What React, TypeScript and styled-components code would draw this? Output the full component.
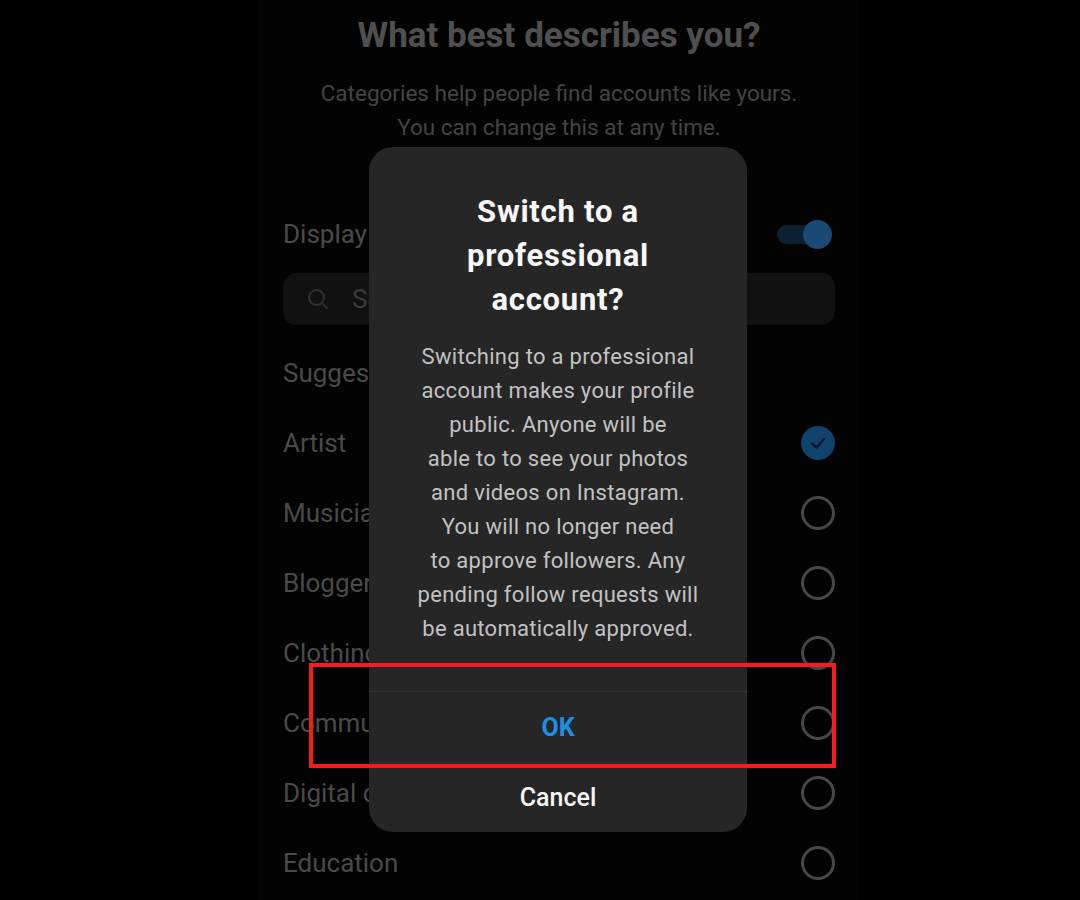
import React from 'react';
import styled, { createGlobalStyle } from 'styled-components';

const CATEGORIES = [
  { id: 1, label: 'Artist', checked: true },
  { id: 2, label: 'Musician/band', checked: false },
  { id: 3, label: 'Blogger', checked: false },
  { id: 4, label: 'Clothing (Brand)', checked: false },
  { id: 5, label: 'Community', checked: false },
  { id: 6, label: 'Digital creator', checked: false },
  { id: 7, label: 'Education', checked: false },
];

const BODY_LINES = [
  'Switching to a professional',
  'account makes your profile',
  'public. Anyone will be',
  'able to to see your photos',
  'and videos on Instagram.',
  'You will no longer need',
  'to approve followers. Any',
  'pending follow requests will',
  'be automatically approved.',
];

const GlobalStyle = createGlobalStyle`
  html, body {
    margin: 0;
    padding: 0;
    background: #000;
  }
  body {
    width: 1080px;
    height: 900px;
    overflow: hidden;
    font-family: Roboto, "Liberation Sans", sans-serif;
  }
`;

const Screen = styled.div`
  width: 1080px;
  height: 900px;
  background: #000;
`;

const Phone = styled.div`
  position: relative;
  margin-left: 258px;
  width: 600px;
  height: 900px;
  background: #030303;
  padding: 14px 23px 0 25px;
  box-sizing: border-box;
`;

const Title = styled.h1`
  margin: 0;
  font-size: 35px;
  line-height: 44px;
  font-weight: 700;
  color: #4f4f4f;
  text-align: center;
`;

const Subtitle = styled.p`
  margin: 18px 0 0;
  font-size: 22.5px;
  line-height: 34px;
  color: #434343;
  text-align: center;
`;

const DisplayRow = styled.div`
  display: flex;
  align-items: center;
  justify-content: space-between;
  height: 50px;
  margin-top: 65px;
`;

const RowLabel = styled.span`
  font-size: 26px;
  color: #4a4a4a;
`;

const Toggle = styled.div`
  position: relative;
  width: 42px;
  height: 19px;
  margin-right: 16px;
  border-radius: 10px;
  background: #0c2032;
`;

const Knob = styled.div`
  position: absolute;
  right: -13px;
  top: -5px;
  width: 29px;
  height: 29px;
  border-radius: 50%;
  background: #1a4a74;
`;

const Search = styled.div`
  display: flex;
  align-items: center;
  gap: 22px;
  height: 52px;
  margin-top: 14px;
  padding: 0 23px;
  border-radius: 14px;
  background: #111;
  font-size: 26px;
  color: #3a3a3a;
`;

const SectionRow = styled.div`
  display: flex;
  align-items: center;
  height: 70px;
  margin-top: 13px;
`;

const CategoryRow = styled.div`
  display: flex;
  align-items: center;
  justify-content: space-between;
  height: 70px;
`;

const Radio = styled.div<{ checked?: boolean }>`
  display: flex;
  align-items: center;
  justify-content: center;
  width: 34px;
  height: 34px;
  box-sizing: border-box;
  border-radius: 50%;
  border: ${({ checked }) => (checked ? 'none' : '3px solid #474747')};
  background: ${({ checked }) => (checked ? '#0f436e' : 'transparent')};
`;

const Dialog = styled.div`
  position: absolute;
  top: 147px;
  left: 111px;
  width: 378px;
  height: 685px;
  display: flex;
  flex-direction: column;
  border-radius: 24px;
  background: #262626;
  text-align: center;
`;

const DialogTitle = styled.h2`
  margin: 43px 0 0;
  font-size: 31px;
  line-height: 44px;
  letter-spacing: 0.75px;
  font-weight: 700;
  color: #f7f7f7;
`;

const DialogBody = styled.p`
  margin: 18px 0 0;
  font-size: 22px;
  line-height: 34px;
  letter-spacing: 0.3px;
  color: #c2c2c2;
`;

const Actions = styled.div`
  margin-top: auto;
  display: flex;
  flex-direction: column;
`;

const DialogButton = styled.button<{ primary?: boolean }>`
  display: flex;
  align-items: center;
  justify-content: center;
  height: ${({ primary }) => (primary ? '71px' : '70px')};
  padding: 0;
  border: none;
  border-top: 1px solid ${({ primary }) => (primary ? '#353535' : '#303030')};
  background: transparent;
  font-family: inherit;
  font-size: 25px;
  font-weight: ${({ primary }) => (primary ? 700 : 500)};
  color: ${({ primary }) => (primary ? '#1d8fe4' : '#f5f5f5')};
`;

const Highlight = styled.div`
  position: absolute;
  top: 663px;
  left: 51px;
  width: 527px;
  height: 105px;
  box-sizing: border-box;
  border: 4px solid #f71b1b;
  pointer-events: none;
`;

const SearchIcon = () => (
  <svg width="24" height="24" viewBox="0 0 24 24" fill="none" stroke="#303030" strokeWidth="2">
    <circle cx="10.5" cy="10.5" r="7.5" />
    <line x1="16" y1="16" x2="21" y2="21" strokeLinecap="round" />
  </svg>
);

const Check = () => (
  <svg width="20" height="20" viewBox="0 0 20 20" fill="none" stroke="#07182a" strokeWidth="2.4" strokeLinecap="round" strokeLinejoin="round">
    <polyline points="4,10.5 8.5,14.5 16,6" />
  </svg>
);

const App: React.FC = () => (
  <Screen>
    <GlobalStyle />
    <Phone>
      <Title>What best describes you?</Title>
      <Subtitle>
        Categories help people find accounts like yours.
        <br />
        You can change this at any time.
      </Subtitle>
      <DisplayRow>
        <RowLabel>Display category on profile</RowLabel>
        <Toggle>
          <Knob />
        </Toggle>
      </DisplayRow>
      <Search>
        <SearchIcon />
        <span>Search categories</span>
      </Search>
      <SectionRow>
        <RowLabel>Suggested</RowLabel>
      </SectionRow>
      {CATEGORIES.map(({ id, label, checked }) => (
        <CategoryRow key={id}>
          <RowLabel>{label}</RowLabel>
          <Radio checked={checked}>{checked && <Check />}</Radio>
        </CategoryRow>
      ))}

      <Dialog>
        <DialogTitle>
          Switch to a
          <br />
          professional
          <br />
          account?
        </DialogTitle>
        <DialogBody>
          {BODY_LINES.map((line, i) => (
            <React.Fragment key={i}>
              {line}
              {i < BODY_LINES.length - 1 && <br />}
            </React.Fragment>
          ))}
        </DialogBody>
        <Actions>
          <DialogButton primary>OK</DialogButton>
          <DialogButton>Cancel</DialogButton>
        </Actions>
      </Dialog>
      <Highlight />
    </Phone>
  </Screen>
);

export default App;
